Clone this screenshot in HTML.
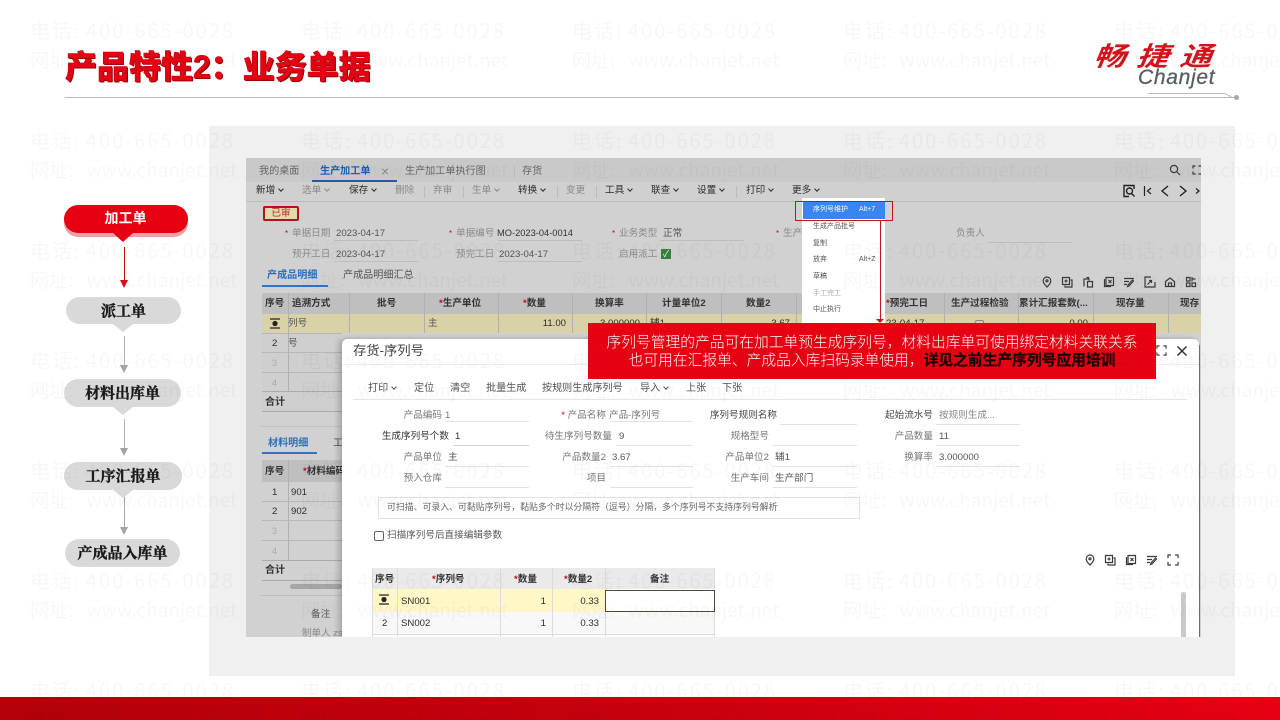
<!DOCTYPE html>
<html lang="zh">
<head>
<meta charset="utf-8">
<title>产品特性2：业务单据</title>
<style>
html,body{margin:0;padding:0;width:1280px;height:720px;overflow:hidden;background:#fff}
body{position:relative;font-family:"Liberation Sans","Noto Sans CJK SC",sans-serif;color:#444}
.a{position:absolute}
.t{position:absolute;white-space:nowrap;line-height:14px;font-size:9.600px;color:#555;margin-top:1px}
.h{font-size:10.100px}
.b{font-weight:bold;color:#333}
.g{color:#8a8a8a}
.q{color:#777}
.k{color:#2c2c2c}
.r{text-align:right}
.s{color:#b5121b}
.ch::after{content:"";display:inline-block;width:3px;height:3px;border:solid currentColor;border-width:0 1.200px 1.200px 0;transform:rotate(45deg);margin:0 0 2px 4px}
.l{position:absolute;height:1px;background:#bdbdbd}
.v{position:absolute;width:1px}
.title{left:65px;top:46px;font-size:32px;line-height:42px;font-weight:900;color:#e60012;-webkit-text-stroke:.6px #c00010;text-shadow:1px 1px 0 #800;white-space:nowrap;font-family:"Liberation Sans","Noto Sans CJK SC",sans-serif}
.pill{position:absolute;border-radius:14px;background:#d9d9d9;text-align:center;font-size:15px;line-height:27px;font-weight:bold;color:#1a1a1a;-webkit-text-stroke:.4px #1a1a1a;white-space:nowrap;font-family:"Noto Serif CJK SC","Noto Sans CJK SC",serif}
.tip{position:absolute;width:0;height:0;border-left:10.500px solid transparent;border-right:10.500px solid transparent;border-top:8px solid #d9d9d9}
.wm{position:absolute;left:30px;white-space:nowrap;font-size:20px;line-height:24px;color:rgba(60,60,70,.04);font-family:"Noto Sans CJK SC",sans-serif;width:1400px;z-index:50;pointer-events:none}
.wm span{display:inline-block;width:271px;letter-spacing:2px;word-spacing:-2px}
.wm.u{font-size:19px}
.wm.u span{letter-spacing:0;word-spacing:9px}
.m{position:absolute;left:813px;font-size:7px;line-height:10px;color:#555;white-space:nowrap}
svg.ic{position:absolute;fill:none;stroke:#3a3a3a;stroke-width:1.200}
</style>
</head>
<body>

<svg width="0" height="0" style="position:absolute">
<defs>
<symbol id="pin" viewBox="0 0 12 12"><path d="M6 1a3.800 3.800 0 0 1 3.800 3.800C9.800 7.500 6 11 6 11S2.200 7.500 2.200 4.800A3.800 3.800 0 0 1 6 1z"/><circle cx="6" cy="4.800" r="1"/></symbol>
<symbol id="cp" viewBox="0 0 12 12"><path d="M1.500 1.500h7v7h-7z"/><path d="M9.500 4h1.500v7H4V9.500"/><path d="M5 3.500v3M3.500 5h3"/></symbol>
<symbol id="pa" viewBox="0 0 12 12"><path d="M2 10.500V3h5v1.500M4.500 1.500h2V3"/><path d="M5.500 5.500h5v5.500h-5z"/></symbol>
<symbol id="dl" viewBox="0 0 12 12"><path d="M3 1.500h7.500v8H3z"/><path d="M1.500 3v7.500H8"/><path d="M5.500 4l3 3M8.500 4l-3 3"/></symbol>
<symbol id="ed" viewBox="0 0 12 12"><path d="M1 2.500h10M1 5.500h5M1 8.500h3"/><path d="M10.500 5L6 10l-1.500.5L5 9l4.500-5z"/></symbol>
<symbol id="im" viewBox="0 0 12 12"><path d="M11 6v5H1V1h6"/><path d="M3.500 8.500L7 5M5 4.500h2.500V7"/></symbol>
<symbol id="ho" viewBox="0 0 12 12"><path d="M1.500 5.500L6 2l4.500 3.500V10.500h-9z"/><path d="M4.500 10.500V7h3v3.500"/></symbol>
<symbol id="gr" viewBox="0 0 12 12"><path d="M1.500 1.500h3.500v3.500H1.500zM1.500 7h3.500v3.500H1.500zM7 1v4.500M7 3h3.500M7 7h3.500v3.500H7z"/></symbol>
<symbol id="fs" viewBox="0 0 12 12"><path d="M1 4V1h3M8 1h3v3M11 8v3H8M4 11H1V8"/></symbol>
</defs>
</svg>

<!-- Header -->
<div class="a title">产品特性2：业务单据</div>
<div class="a" style="left:65px;top:97px;width:1171px;height:1px;background:#b9b9b9"></div>
<div class="a" style="left:1234px;top:95px;width:5px;height:5px;border-radius:50%;background:#a8a8a8"></div>
<svg class="a" style="left:1145px;top:90px" width="92" height="10"><path d="M3 3.500H80L87 7.500" fill="none" stroke="#b9b9b9" stroke-width="1"/></svg>
<div class="a" style="left:1094px;top:36px;font:italic bold 32px/38px 'Noto Sans CJK SC',sans-serif;color:#d2151c;letter-spacing:11px;white-space:nowrap;transform:skewX(-6deg) scaleY(.82)">畅捷通</div>
<div class="a" style="left:1138px;top:66px;font:italic 21px/24px 'Liberation Sans',sans-serif;letter-spacing:.7px;color:#585f63;white-space:nowrap;-webkit-text-stroke:.3px #585f63">Chanjet</div>

<!-- Gray panel -->
<div class="a" style="left:209px;top:126px;width:1026px;height:550px;background:#f0f0f0"></div>

<!-- Flow -->
<div class="a" style="left:64px;top:208px;width:124px;height:28.500px;border-radius:14px;background:#eda0a2"></div>
<div class="a" style="left:64px;top:205px;width:124px;height:28px;border-radius:14px;background:#e60012;text-align:center;font-size:14px;line-height:27px;color:#fff;font-weight:bold;text-indent:-1px">加工单</div>
<div class="a" style="left:113px;top:233px;width:0;height:0;border-left:10px solid transparent;border-right:10px solid transparent;border-top:9px solid #e60012"></div>
<div class="a" style="left:123.500px;top:247px;width:1px;height:34px;background:#c8101a"></div>
<div class="a" style="left:120px;top:280px;width:0;height:0;border-left:4px solid transparent;border-right:4px solid transparent;border-top:8px solid #d80c18"></div>

<div class="pill" style="left:66px;top:297px;width:115px;height:27px">派工单</div>
<div class="tip" style="left:113px;top:324px"></div>
<div class="a" style="left:123.500px;top:336px;width:1px;height:30px;background:#b4b4b4"></div>
<div class="a" style="left:120px;top:365px;width:0;height:0;border-left:4px solid transparent;border-right:4px solid transparent;border-top:8px solid #a4a4a4"></div>

<div class="pill" style="left:64px;top:379px;width:117px;height:28px">材料出库单</div>
<div class="tip" style="left:113px;top:407px"></div>
<div class="a" style="left:123.500px;top:419px;width:1px;height:30px;background:#b4b4b4"></div>
<div class="a" style="left:120px;top:448px;width:0;height:0;border-left:4px solid transparent;border-right:4px solid transparent;border-top:8px solid #a4a4a4"></div>

<div class="pill" style="left:64px;top:462px;width:118px;height:28px">工序汇报单</div>
<div class="tip" style="left:113px;top:490px"></div>
<div class="a" style="left:123.500px;top:497px;width:1px;height:31px;background:#a8a8a8"></div>
<div class="a" style="left:120px;top:527px;width:0;height:0;border-left:4px solid transparent;border-right:4px solid transparent;border-top:8px solid #a4a4a4"></div>

<div class="pill" style="left:65px;top:539px;width:115px;height:28px">产成品入库单</div>

<div class="a" style="left:0;top:0;width:1280px;height:720px;filter:blur(.3px)">
<!-- Screenshot -->
<div class="a" style="left:246px;top:158px;width:955px;height:479px;background:#d1d1d1"></div>
<div class="a" style="left:246px;top:158px;width:955px;height:24px;background:#c9c9c9"></div>
<div class="a" style="left:246px;top:182px;width:955px;height:20px;background:#d0d0d0;border-bottom:1px solid #bcbcbc;box-sizing:border-box"></div>

<span class="t h" style="left:259px;top:164px;color:#666">我的桌面</span>
<span class="t h" style="left:320px;top:164px;color:#1f5fb0;font-weight:bold">生产加工单</span>
<span class="t g" style="left:381px;top:163px;font-size:14px">×</span>
<div class="a" style="left:312px;top:180px;width:85px;height:2px;background:#2a55aa"></div>
<span class="t h" style="left:405px;top:164px;color:#666">生产加工单执行图</span>
<div class="v" style="left:514px;top:166px;height:12px;background:#bbb"></div>
<span class="t h" style="left:522px;top:164px;color:#666">存货</span>
<svg class="ic" style="left:1169px;top:164px" width="12" height="12" viewBox="0 0 12 12"><circle cx="5" cy="5" r="3.600"/><path d="M8 8l3 3"/></svg>
<svg class="ic" style="left:1192px;top:165px" width="9" height="10" viewBox="0 0 9 10"><path d="M1 3.500V1h2.500M6.500 1H9M9 9H6.500M3.500 9H1V6.500"/></svg>

<span class="t k ch" style="left:256px;top:183px">新增</span>
<span class="t g ch" style="left:302px;top:183px">选单</span>
<span class="t k ch" style="left:349px;top:183px">保存</span>
<span class="t g" style="left:395px;top:183px">删除</span>
<span class="t g" style="left:433px;top:183px">弃审</span>
<span class="t g ch" style="left:472px;top:183px">生单</span>
<span class="t k ch" style="left:518px;top:183px">转换</span>
<span class="t g" style="left:566px;top:183px">变更</span>
<span class="t k ch" style="left:605px;top:183px">工具</span>
<span class="t k ch" style="left:651px;top:183px">联查</span>
<span class="t k ch" style="left:697px;top:183px">设置</span>
<span class="t k ch" style="left:746px;top:183px">打印</span>
<span class="t k ch" style="left:792px;top:183px">更多</span>
<div class="v" style="left:424px;top:186px;height:12px;background:#bbb"></div>
<div class="v" style="left:463px;top:186px;height:12px;background:#bbb"></div>
<div class="v" style="left:557px;top:186px;height:12px;background:#bbb"></div>
<div class="v" style="left:596px;top:186px;height:12px;background:#bbb"></div>
<div class="v" style="left:736px;top:186px;height:12px;background:#bbb"></div>
<svg class="ic" style="left:1122px;top:184px;stroke:#222;stroke-width:1.400" width="14" height="14" viewBox="0 0 14 14"><path d="M12 5V1.500H2V12.500H7"/><circle cx="7.500" cy="7" r="3"/><path d="M9.500 9.500l3 3"/></svg>
<svg class="ic" style="left:1143px;top:185px;stroke:#222" width="10" height="12" viewBox="0 0 10 12"><path d="M1.500 1v10M8 3L4.500 6 8 9"/></svg>
<svg class="ic" style="left:1160px;top:185px;stroke:#222;stroke-width:1.400" width="10" height="12" viewBox="0 0 10 12"><path d="M8 1L2 6l6 5"/></svg>
<svg class="ic" style="left:1178px;top:185px;stroke:#222;stroke-width:1.400" width="10" height="12" viewBox="0 0 10 12"><path d="M2 1l6 5-6 5"/></svg>
<svg class="ic" style="left:1195px;top:185px;stroke:#222" width="6" height="12" viewBox="0 0 6 12"><path d="M1 3.500L4 6 1 8.500"/></svg>

<!-- Stamp and form -->
<div class="a" style="left:263px;top:206px;width:36px;height:15px;box-sizing:border-box;border:2px solid #b2141c;border-radius:2px;background:#e2d9ad;color:#c12a2a;font-size:9.600px;line-height:11px;text-align:center">已审</div>
<span class="t s" style="left:285px;top:226px;font-size:8px">*</span>
<span class="t g" style="left:292px;top:226px">单据日期</span>
<span class="t" style="left:336px;top:226px">2023-04-17</span>
<span class="t s" style="left:449px;top:226px;font-size:8px">*</span>
<span class="t g" style="left:456px;top:226px">单据编号</span>
<span class="t" style="left:497px;top:225px;color:#333;font-size:9.300px">MO-2023-04-0014</span>
<span class="t s" style="left:612px;top:226px;font-size:8px">*</span>
<span class="t g" style="left:619px;top:226px">业务类型</span>
<span class="t" style="left:663px;top:226px">正常</span>
<span class="t s" style="left:776px;top:226px;font-size:8px">*</span>
<span class="t g" style="left:783px;top:226px">生产</span>
<span class="t g" style="left:956px;top:226px">负责人</span>
<div class="l" style="left:334px;top:240px;width:84px"></div>
<div class="l" style="left:498px;top:240px;width:84px"></div>
<div class="l" style="left:660px;top:240px;width:84px"></div>
<div class="l" style="left:988px;top:242px;width:84px"></div>
<span class="t g" style="left:292px;top:247px">预开工日</span>
<span class="t" style="left:336px;top:247px">2023-04-17</span>
<span class="t g" style="left:456px;top:247px">预完工日</span>
<span class="t" style="left:499px;top:247px">2023-04-17</span>
<span class="t g" style="left:619px;top:247px">启用派工</span>
<div class="a" style="left:661px;top:249px;width:10px;height:10px;background:#3c7f3c;color:#dfe;font-size:9px;line-height:10px;text-align:center">✓</div>
<div class="l" style="left:334px;top:261px;width:84px"></div>
<div class="l" style="left:498px;top:261px;width:84px"></div>

<span class="t h" style="left:267px;top:268px;color:#2f6fc0;font-weight:bold">产成品明细</span>
<span class="t h" style="left:343px;top:268px;color:#555">产成品明细汇总</span>
<div class="a" style="left:262px;top:285px;width:66px;height:2px;background:#2f73c9"></div>

<svg class="ic" style="left:1041px;top:276px" width="12" height="12"><use href="#pin"/></svg>
<svg class="ic" style="left:1061px;top:276px" width="12" height="12"><use href="#cp"/></svg>
<svg class="ic" style="left:1082px;top:276px" width="12" height="12"><use href="#pa"/></svg>
<svg class="ic" style="left:1103px;top:276px" width="12" height="12"><use href="#dl"/></svg>
<svg class="ic" style="left:1123px;top:276px" width="12" height="12"><use href="#ed"/></svg>
<svg class="ic" style="left:1144px;top:276px" width="12" height="12"><use href="#im"/></svg>
<svg class="ic" style="left:1164px;top:276px" width="12" height="12"><use href="#ho"/></svg>
<svg class="ic" style="left:1185px;top:276px" width="12" height="12"><use href="#gr"/></svg>

<!-- Top table -->
<div class="a" style="left:262px;top:293px;width:939px;height:21px;background:#bfbfbf"></div>
<div class="a" style="left:262px;top:314px;width:939px;height:19px;background:#d9d2a6"></div>
<div class="a" style="left:262px;top:333px;width:80px;height:78px;background:#cfcfcf"></div>
<div class="l" style="left:262px;top:333px;width:80px;background:#b7b7b7"></div>
<div class="l" style="left:262px;top:352px;width:80px;background:#b7b7b7"></div>
<div class="l" style="left:262px;top:372px;width:80px;background:#b7b7b7"></div>
<div class="l" style="left:262px;top:391px;width:80px;background:#aaa"></div>
<div class="l" style="left:262px;top:411px;width:80px;background:#aaa"></div>
<div class="v" style="left:288px;top:293px;height:98px;background:#b0b0b0"></div>
<div class="v" style="left:349px;top:293px;height:40px;background:#b0b0b0"></div>
<div class="v" style="left:424px;top:293px;height:40px;background:#b0b0b0"></div>
<div class="v" style="left:498px;top:293px;height:40px;background:#b0b0b0"></div>
<div class="v" style="left:572px;top:293px;height:40px;background:#b0b0b0"></div>
<div class="v" style="left:646px;top:293px;height:40px;background:#b0b0b0"></div>
<div class="v" style="left:721px;top:293px;height:40px;background:#b0b0b0"></div>
<div class="v" style="left:796px;top:293px;height:40px;background:#b0b0b0"></div>
<div class="v" style="left:944px;top:293px;height:40px;background:#b0b0b0"></div>
<div class="v" style="left:1018px;top:293px;height:40px;background:#b0b0b0"></div>
<div class="v" style="left:1093px;top:293px;height:40px;background:#b0b0b0"></div>
<div class="v" style="left:1168px;top:293px;height:40px;background:#b0b0b0"></div>
<span class="t b" style="left:265px;top:296px">序号</span>
<span class="t b" style="left:292px;top:296px">追溯方式</span>
<span class="t b" style="left:377px;top:296px">批号</span>
<span class="t b" style="left:439px;top:296px"><span class="s">*</span>生产单位</span>
<span class="t b" style="left:523px;top:296px"><span class="s">*</span>数量</span>
<span class="t b" style="left:595px;top:296px">换算率</span>
<span class="t b" style="left:662px;top:296px">计量单位2</span>
<span class="t b" style="left:746px;top:296px">数量2</span>
<span class="t b" style="left:886px;top:296px"><span class="s">*</span>预完工日</span>
<span class="t b" style="left:951px;top:296px">生产过程检验</span>
<span class="t b" style="left:1019px;top:296px">累计汇报套数(...</span>
<span class="t b" style="left:1116px;top:296px">现存量</span>
<span class="t b" style="left:1180px;top:296px">现存</span>
<svg class="ic" style="left:269px;top:318px;stroke:#222" width="12" height="11" viewBox="0 0 12 11"><path d="M1 1h10M1 10h10"/><circle cx="6" cy="5.500" r="2" fill="#222"/></svg>
<span class="t" style="left:288px;top:316px">列号</span>
<span class="t" style="left:428px;top:316px">主</span>
<span class="t k r" style="left:520px;top:316px;width:46px">11.00</span>
<span class="t k r" style="left:590px;top:316px;width:50px">3.000000</span>
<span class="t k" style="left:650px;top:316px">辅1</span>
<span class="t k r" style="left:740px;top:316px;width:50px">3.67</span>
<span class="t k" style="left:886px;top:316px">23-04-17</span>
<div class="a" style="left:975px;top:320px;width:9px;height:9px;border:1px solid #888;border-radius:2px;box-sizing:border-box"></div>
<span class="t k r" style="left:1040px;top:316px;width:48px">0.00</span>
<span class="t k" style="left:272px;top:336px">2</span>
<span class="t" style="left:288px;top:336px">号</span>
<span class="t" style="left:272px;top:355px;color:#aaa;font-size:9px">3</span>
<span class="t" style="left:272px;top:375px;color:#aaa;font-size:9px">4</span>
<span class="t b" style="left:265px;top:395px;font-size:10px">合计</span>

<!-- Material table -->
<span class="t h" style="left:268px;top:436px;color:#2f6fc0;font-weight:bold">材料明细</span>
<span class="t h" style="left:333px;top:436px">工</span>
<div class="a" style="left:262px;top:452px;width:55px;height:2px;background:#2f73c9"></div>
<div class="l" style="left:260px;top:426px;width:82px;background:#c2c2c2"></div>
<div class="a" style="left:262px;top:460px;width:80px;height:22px;background:#bfbfbf"></div>
<div class="v" style="left:288px;top:460px;height:100px;background:#b0b0b0"></div>
<div class="l" style="left:262px;top:501px;width:80px;background:#b7b7b7"></div>
<div class="l" style="left:262px;top:520px;width:80px;background:#b7b7b7"></div>
<div class="l" style="left:262px;top:540px;width:80px;background:#b7b7b7"></div>
<div class="l" style="left:262px;top:560px;width:80px;background:#aaa"></div>
<div class="l" style="left:262px;top:580px;width:80px;background:#aaa"></div>
<span class="t b" style="left:265px;top:464px">序号</span>
<span class="t b" style="left:303px;top:464px"><span class="s">*</span>材料编码</span>
<span class="t k" style="left:272px;top:485px">1</span>
<span class="t k" style="left:291px;top:485px">901</span>
<span class="t k" style="left:272px;top:504px">2</span>
<span class="t k" style="left:291px;top:504px">902</span>
<span class="t" style="left:272px;top:523px;color:#aaa;font-size:9px">3</span>
<span class="t" style="left:272px;top:543px;color:#aaa;font-size:9px">4</span>
<span class="t b" style="left:265px;top:563px;font-size:10px">合计</span>
<div class="a" style="left:290px;top:584px;width:52px;height:5px;border-radius:3px;background:#a6a6a6"></div>
<div class="l" style="left:260px;top:595px;width:82px;background:#bebebe"></div>
<span class="t" style="left:311px;top:607px">备注</span>
<span class="t g" style="left:302px;top:626px;font-size:9.500px">制单人 zs</span>

<!-- Dropdown menu -->
<div class="a" style="left:802px;top:198px;width:83px;height:125px;background:#fff"></div>
<div class="a" style="left:803px;top:202px;width:82px;height:17px;background:#3a86f0"></div>
<span class="m" style="top:205px;color:#fff">序列号维护</span><span class="m" style="top:205px;left:859px;color:#fff">Alt+7</span>
<span class="m" style="top:222px">生成产品批号</span>
<span class="m" style="top:239px">复制</span>
<span class="m" style="top:255px">放弃</span><span class="m" style="top:255px;left:859px">Alt+Z</span>
<span class="m" style="top:272px">草稿</span>
<span class="m" style="top:289px;color:#aaa">手工完工</span>
<span class="m" style="top:305px">中止执行</span>
<div class="a" style="left:795px;top:201px;width:98px;height:20px;box-sizing:border-box;border:1.500px solid #c8121c"></div>
<div class="a" style="left:880px;top:221px;width:1px;height:99px;background:#c8121c"></div>

<!-- Modal -->
<div class="a" style="left:342px;top:339px;width:857px;height:298px;background:#fff;border-radius:5px 5px 0 0;box-shadow:-4px 0 6px rgba(0,0,0,.18),0 -1px 2px rgba(0,0,0,.08);clip-path:inset(-8px -1px 0 -8px)"></div>
<div class="a" style="left:1199px;top:345px;width:1px;height:292px;background:#6c6c6c"></div>
<span class="t" style="left:353px;top:342px;font-size:13.300px;line-height:16px;color:#444">存货-序列号</span>
<div class="l" style="left:342px;top:364px;width:857px;background:#ececec"></div>
<svg class="ic" style="left:1156px;top:345px;stroke:#333" width="11" height="11"><use href="#fs"/></svg>
<svg class="ic" style="left:1176px;top:345px;stroke:#333;stroke-width:1.500" width="12" height="12" viewBox="0 0 12 12"><path d="M1.500 1.500l9 9M10.500 1.500l-9 9"/></svg>
<span class="t h ch" style="left:368px;top:381px">打印</span>
<span class="t h" style="left:414px;top:381px">定位</span>
<span class="t h" style="left:450px;top:381px">清空</span>
<span class="t h" style="left:486px;top:381px">批量生成</span>
<span class="t h" style="left:542px;top:381px">按规则生成序列号</span>
<span class="t h ch" style="left:640px;top:381px">导入</span>
<span class="t h" style="left:686px;top:381px">上张</span>
<span class="t h" style="left:722px;top:381px">下张</span>
<div class="l" style="left:353px;top:399px;width:834px;background:#e4e4e4"></div>

<span class="t q r" style="left:381px;top:408px;width:61px">产品编码</span><span class="t q" style="left:445px;top:408px">1</span>
<span class="t q r" style="left:545px;top:408px;width:61px"><span class="s">*</span> 产品名称</span><span class="t q" style="left:609px;top:408px">产品-序列号</span>
<span class="t r" style="left:697px;top:408px;width:80px;color:#444">序列号规则名称</span>
<span class="t r" style="left:873px;top:408px;width:60px;color:#444">起始流水号</span><span class="t" style="left:939px;top:408px;color:#888">按规则生成...</span>

<span class="t r" style="left:368px;top:429px;width:81px;color:#333">生成序列号个数</span><span class="t k" style="left:455px;top:429px">1</span>
<span class="t q r" style="left:531px;top:429px;width:81px">待生序列号数量</span><span class="t" style="left:619px;top:429px">9</span>
<span class="t q r" style="left:698px;top:429px;width:71px">规格型号</span>
<span class="t q r" style="left:873px;top:429px;width:60px">产品数量</span><span class="t" style="left:939px;top:429px">11</span>

<span class="t q r" style="left:381px;top:450px;width:61px">产品单位</span><span class="t" style="left:448px;top:450px">主</span>
<span class="t q r" style="left:545px;top:450px;width:61px">产品数量2</span><span class="t" style="left:612px;top:450px">3.67</span>
<span class="t q r" style="left:698px;top:450px;width:71px">产品单位2</span><span class="t" style="left:775px;top:450px">辅1</span>
<span class="t q r" style="left:873px;top:450px;width:60px">换算率</span><span class="t" style="left:939px;top:450px">3.000000</span>

<span class="t q r" style="left:381px;top:471px;width:61px">预入仓库</span>
<span class="t q r" style="left:545px;top:471px;width:61px">项目</span>
<span class="t q r" style="left:698px;top:471px;width:71px">生产车间</span><span class="t" style="left:775px;top:471px">生产部门</span>

<div class="l" style="left:445px;top:421px;width:84px;background:#e2e2e2"></div>
<div class="l" style="left:610px;top:421px;width:83px;background:#e2e2e2"></div>
<div class="l" style="left:780px;top:424px;width:77px;background:#e2e2e2"></div>
<div class="l" style="left:936px;top:424px;width:84px;background:#e2e2e2"></div>
<div class="l" style="left:453px;top:445px;width:76px;background:#d4d4d4"></div>
<div class="l" style="left:616px;top:445px;width:77px;background:#e2e2e2"></div>
<div class="l" style="left:773px;top:445px;width:84px;background:#e2e2e2"></div>
<div class="l" style="left:936px;top:445px;width:84px;background:#e2e2e2"></div>
<div class="l" style="left:445px;top:466px;width:84px;background:#e2e2e2"></div>
<div class="l" style="left:610px;top:466px;width:83px;background:#e2e2e2"></div>
<div class="l" style="left:773px;top:466px;width:84px;background:#e2e2e2"></div>
<div class="l" style="left:936px;top:466px;width:84px;background:#e2e2e2"></div>
<div class="l" style="left:445px;top:487px;width:84px;background:#e2e2e2"></div>
<div class="l" style="left:610px;top:487px;width:83px;background:#e2e2e2"></div>
<div class="l" style="left:773px;top:487px;width:84px;background:#e2e2e2"></div>

<div class="a" style="left:378px;top:497px;width:482px;height:22px;box-sizing:border-box;border:1px solid #e2e2e2"></div>
<span class="t" style="left:387px;top:499px;font-size:8.900px;color:#666">可扫描、可录入、可黏贴序列号，黏贴多个时以分隔符（逗号）分隔，多个序列号不支持序列号解析</span>
<div class="a" style="left:374px;top:531px;width:10px;height:10px;box-sizing:border-box;border:1px solid #666;border-radius:2px"></div>
<span class="t" style="left:387px;top:528px">扫描序列号后直接编辑参数</span>

<svg class="ic" style="left:1084px;top:554px" width="12" height="12"><use href="#pin"/></svg>
<svg class="ic" style="left:1104px;top:554px" width="12" height="12"><use href="#cp"/></svg>
<svg class="ic" style="left:1125px;top:554px" width="12" height="12"><use href="#dl"/></svg>
<svg class="ic" style="left:1146px;top:554px" width="12" height="12"><use href="#ed"/></svg>
<svg class="ic" style="left:1167px;top:554px" width="12" height="12"><use href="#fs"/></svg>

<!-- Modal table -->
<div class="a" style="left:372px;top:568px;width:343px;height:21px;background:#eaeaea"></div>
<div class="a" style="left:372px;top:589px;width:233px;height:23px;background:#fff7c6"></div>
<div class="a" style="left:372px;top:612px;width:343px;height:22px;background:#f8f8f8"></div>
<div class="v" style="left:397px;top:568px;height:69px;background:#dcdcdc"></div>
<div class="v" style="left:500px;top:568px;height:69px;background:#dcdcdc"></div>
<div class="v" style="left:552px;top:568px;height:69px;background:#dcdcdc"></div>
<div class="v" style="left:605px;top:568px;height:69px;background:#dcdcdc"></div>
<div class="v" style="left:372px;top:568px;height:69px;background:#dcdcdc"></div>
<div class="v" style="left:714px;top:568px;height:69px;background:#dcdcdc"></div>
<div class="l" style="left:372px;top:634px;width:343px;background:#dcdcdc"></div>
<div class="a" style="left:605px;top:590px;width:110px;height:22px;box-sizing:border-box;border:1.500px solid #4a4a3a;background:#fff"></div>
<span class="t b" style="left:375px;top:572px">序号</span>
<span class="t b" style="left:432px;top:572px"><span class="s">*</span>序列号</span>
<span class="t b" style="left:514px;top:572px"><span class="s">*</span>数量</span>
<span class="t b" style="left:564px;top:572px"><span class="s">*</span>数量2</span>
<span class="t b" style="left:650px;top:572px">备注</span>
<svg class="ic" style="left:378px;top:594px;stroke:#222" width="12" height="11" viewBox="0 0 12 11"><path d="M1 1h10M1 10h10"/><circle cx="6" cy="5.500" r="2" fill="#222"/></svg>
<span class="t k" style="left:401px;top:594px">SN001</span>
<span class="t k r" style="left:520px;top:594px;width:26px">1</span>
<span class="t k r" style="left:569px;top:594px;width:30px">0.33</span>
<span class="t k" style="left:382px;top:616px">2</span>
<span class="t k" style="left:401px;top:616px">SN002</span>
<span class="t k r" style="left:520px;top:616px;width:26px">1</span>
<span class="t k r" style="left:569px;top:616px;width:30px">0.33</span>
<div class="a" style="left:1181px;top:592px;width:5px;height:45px;border-radius:3px 3px 0 0;background:#c9c9c9"></div>
</div>

<!-- Callout -->
<div class="a" style="left:588px;top:323px;width:568px;height:56px;background:#e60012;color:#fff;font-size:14.750px;line-height:18px;text-align:center;padding-top:10px;box-sizing:border-box;font-family:'Noto Sans CJK SC',sans-serif;font-weight:300;white-space:nowrap">
<div>序列号管理的产品可在加工单预生成序列号，材料出库单可使用绑定材料关联关系</div>
<div>也可用在汇报单、产成品入库扫码录单使用，<b style="color:#180000;font-weight:700;-webkit-text-stroke:.3px #180000">详见之前生产序列号应用培训</b></div>
</div>
<div class="a" style="left:876px;top:319px;width:0;height:0;border-left:4px solid transparent;border-right:4px solid transparent;border-top:4px solid #c8121c"></div>

<!-- Footer -->
<div class="a" style="left:0;top:697px;width:1280px;height:23px;background:linear-gradient(90deg,#b30009 0%,#c4000c 45%,#e60012 100%)"></div>

<!-- Watermark -->
<div class="wm" style="top:18px"><span>电话: 400-665-0028</span><span>电话: 400-665-0028</span><span>电话: 400-665-0028</span><span>电话: 400-665-0028</span><span>电话: 400-665-0028</span></div>
<div class="wm u" style="top:48px"><span>网址: www.chanjet.net</span><span>网址: www.chanjet.net</span><span>网址: www.chanjet.net</span><span>网址: www.chanjet.net</span><span>网址: www.chanjet.net</span></div>
<div class="wm" style="top:128px"><span>电话: 400-665-0028</span><span>电话: 400-665-0028</span><span>电话: 400-665-0028</span><span>电话: 400-665-0028</span><span>电话: 400-665-0028</span></div>
<div class="wm u" style="top:158px"><span>网址: www.chanjet.net</span><span>网址: www.chanjet.net</span><span>网址: www.chanjet.net</span><span>网址: www.chanjet.net</span><span>网址: www.chanjet.net</span></div>
<div class="wm" style="top:238px"><span>电话: 400-665-0028</span><span>电话: 400-665-0028</span><span>电话: 400-665-0028</span><span>电话: 400-665-0028</span><span>电话: 400-665-0028</span></div>
<div class="wm u" style="top:268px"><span>网址: www.chanjet.net</span><span>网址: www.chanjet.net</span><span>网址: www.chanjet.net</span><span>网址: www.chanjet.net</span><span>网址: www.chanjet.net</span></div>
<div class="wm" style="top:348px"><span>电话: 400-665-0028</span><span>电话: 400-665-0028</span><span>电话: 400-665-0028</span><span>电话: 400-665-0028</span><span>电话: 400-665-0028</span></div>
<div class="wm u" style="top:378px"><span>网址: www.chanjet.net</span><span>网址: www.chanjet.net</span><span>网址: www.chanjet.net</span><span>网址: www.chanjet.net</span><span>网址: www.chanjet.net</span></div>
<div class="wm" style="top:458px"><span>电话: 400-665-0028</span><span>电话: 400-665-0028</span><span>电话: 400-665-0028</span><span>电话: 400-665-0028</span><span>电话: 400-665-0028</span></div>
<div class="wm u" style="top:488px"><span>网址: www.chanjet.net</span><span>网址: www.chanjet.net</span><span>网址: www.chanjet.net</span><span>网址: www.chanjet.net</span><span>网址: www.chanjet.net</span></div>
<div class="wm" style="top:568px"><span>电话: 400-665-0028</span><span>电话: 400-665-0028</span><span>电话: 400-665-0028</span><span>电话: 400-665-0028</span><span>电话: 400-665-0028</span></div>
<div class="wm u" style="top:598px"><span>网址: www.chanjet.net</span><span>网址: www.chanjet.net</span><span>网址: www.chanjet.net</span><span>网址: www.chanjet.net</span><span>网址: www.chanjet.net</span></div>
<div class="wm" style="top:678px"><span>电话: 400-665-0028</span><span>电话: 400-665-0028</span><span>电话: 400-665-0028</span><span>电话: 400-665-0028</span><span>电话: 400-665-0028</span></div>
<div class="wm u" style="top:708px"><span>网址: www.chanjet.net</span><span>网址: www.chanjet.net</span><span>网址: www.chanjet.net</span><span>网址: www.chanjet.net</span><span>网址: www.chanjet.net</span></div>

</body>
</html>
